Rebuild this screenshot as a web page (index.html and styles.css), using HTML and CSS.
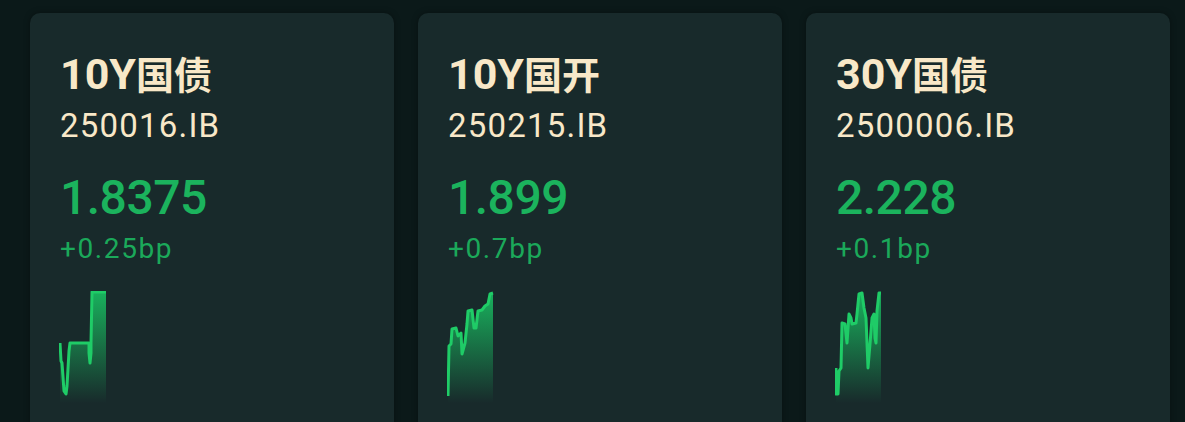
FILE: index.html
```html
<!DOCTYPE html>
<html lang="zh-CN">
<head>
<meta charset="UTF-8">
<meta name="viewport" content="width=device-width, initial-scale=1.0">
<title>债券行情</title>
<link rel="stylesheet" href="styles.css">
</head>
<body>
<div class="board">
    <div class="card">
        <div class="name">10Y<span class="cn">国债</span></div>
        <div class="code">250016.IB</div>
        <div class="yield">1.8375</div>
        <div class="change">+0.25bp</div>
        <svg class="spark" width="48" height="112" viewBox="0 0 48 112">
            <defs>
                <linearGradient id="fade1" x1="0" y1="0" x2="0" y2="1">
                    <stop offset="0" stop-color="#19c062" stop-opacity="0.9"/>
                    <stop offset="1" stop-color="#19c062" stop-opacity="0"/>
                </linearGradient>
            </defs>
            <polygon fill="url(#fade1)" points="1,52 2,70 3,72 5,100 7,103 8,95 10,60 11,52 30,52 31,72 32,52 33,1 47,1 47,112 1,112"/>
            <polyline fill="none" stroke="#1fcc67" stroke-width="3" stroke-linejoin="round" points="1,52 2,70 3,72 5,100 7,103 8,95 10,60 11,52 30,52 30,62 31,72 32,62 32,52 33,1 47,1"/>
        </svg>
    </div>
    <div class="card">
        <div class="name">10Y<span class="cn">国开</span></div>
        <div class="code">250215.IB</div>
        <div class="yield">1.899</div>
        <div class="change">+0.7bp</div>
        <svg class="spark" width="48" height="112" viewBox="0 0 48 112">
            <defs>
                <linearGradient id="fade2" x1="0" y1="0" x2="0" y2="1">
                    <stop offset="0" stop-color="#19c062" stop-opacity="0.9"/>
                    <stop offset="1" stop-color="#19c062" stop-opacity="0"/>
                </linearGradient>
            </defs>
            <polygon fill="url(#fade2)" points="1,105 2,55 4,53 5,38 9,37 11,45 14,42 15,63 18,52 20,33 21,20 25,19 27,37 29,37 31,20 35,19 38,15 41,13 43,3 46,2 46,112 1,112"/>
            <polyline fill="none" stroke="#1fcc67" stroke-width="3" stroke-linejoin="round" points="1,105 2,55 4,53 5,38 9,37 11,45 14,42 15,63 18,52 20,33 21,20 25,19 27,37 29,37 31,20 35,19 38,15 41,13 43,3 46,2"/>
        </svg>
    </div>
    <div class="card">
        <div class="name">30Y<span class="cn">国债</span></div>
        <div class="code">2500006.IB</div>
        <div class="yield">2.228</div>
        <div class="change">+0.1bp</div>
        <svg class="spark" width="48" height="112" viewBox="0 0 48 112">
            <defs>
                <linearGradient id="fade3" x1="0" y1="0" x2="0" y2="1">
                    <stop offset="0" stop-color="#19c062" stop-opacity="0.9"/>
                    <stop offset="1" stop-color="#19c062" stop-opacity="0"/>
                </linearGradient>
            </defs>
            <polygon fill="url(#fade3)" points="1,77 1,103 3,103 4,80 6,77 7,32 10,33 12,52 14,23 16,27 17,33 21,32 22,23 24,3 27,2 29,17 31,27 33,77 35,53 37,27 39,23 40,47 41,52 42,20 44,2 46,2 46,112 1,112"/>
            <polyline fill="none" stroke="#1fcc67" stroke-width="3" stroke-linejoin="round" points="1,77 1,103 3,103 4,80 6,77 7,32 10,33 12,52 14,23 16,27 17,33 21,32 22,23 24,3 27,2 29,17 31,27 33,77 35,53 37,27 39,23 40,47 41,52 42,20 44,2 46,2"/>
        </svg>
    </div>
</div>
</body>
</html>
```

FILE: styles.css
```css
html, body {
    margin: 0;
    padding: 0;
    height: 100%;
    overflow: hidden;
}

body {
    background-color: #0b1919;
    font-family: Roboto, "Noto Sans CJK SC", sans-serif;
}

.board {
    display: flex;
    gap: 24px;
    padding: 13px 15px 0 30px;
}

.card {
    width: 364px;
    height: 440px;
    flex-shrink: 0;
    box-sizing: border-box;
    padding: 36px 30px 0 30px;
    background-color: #182a2b;
    border-radius: 10px;
    box-shadow: 0 0 6px rgba(0, 0, 0, 0.35);
}

.name {
    font-size: 43px;
    font-weight: 700;
    line-height: 48px;
    color: #f8e8c8;
}

.name .cn {
    font-family: "Noto Sans CJK SC", sans-serif;
    font-size: 38px;
}

.code {
    margin-top: 8px;
    font-size: 33px;
    line-height: 40px;
    letter-spacing: 1.2px;
    color: #f8e8c8;
}

.yield {
    margin-top: 24px;
    font-size: 48px;
    font-weight: 500;
    line-height: 56px;
    letter-spacing: -0.5px;
    color: #1bb35d;
}

.change {
    margin-top: 7px;
    font-size: 28px;
    line-height: 32px;
    letter-spacing: 1.6px;
    color: #1ba95a;
}

.spark {
    display: block;
    margin-top: 26px;
    margin-left: -1px;
}
```
